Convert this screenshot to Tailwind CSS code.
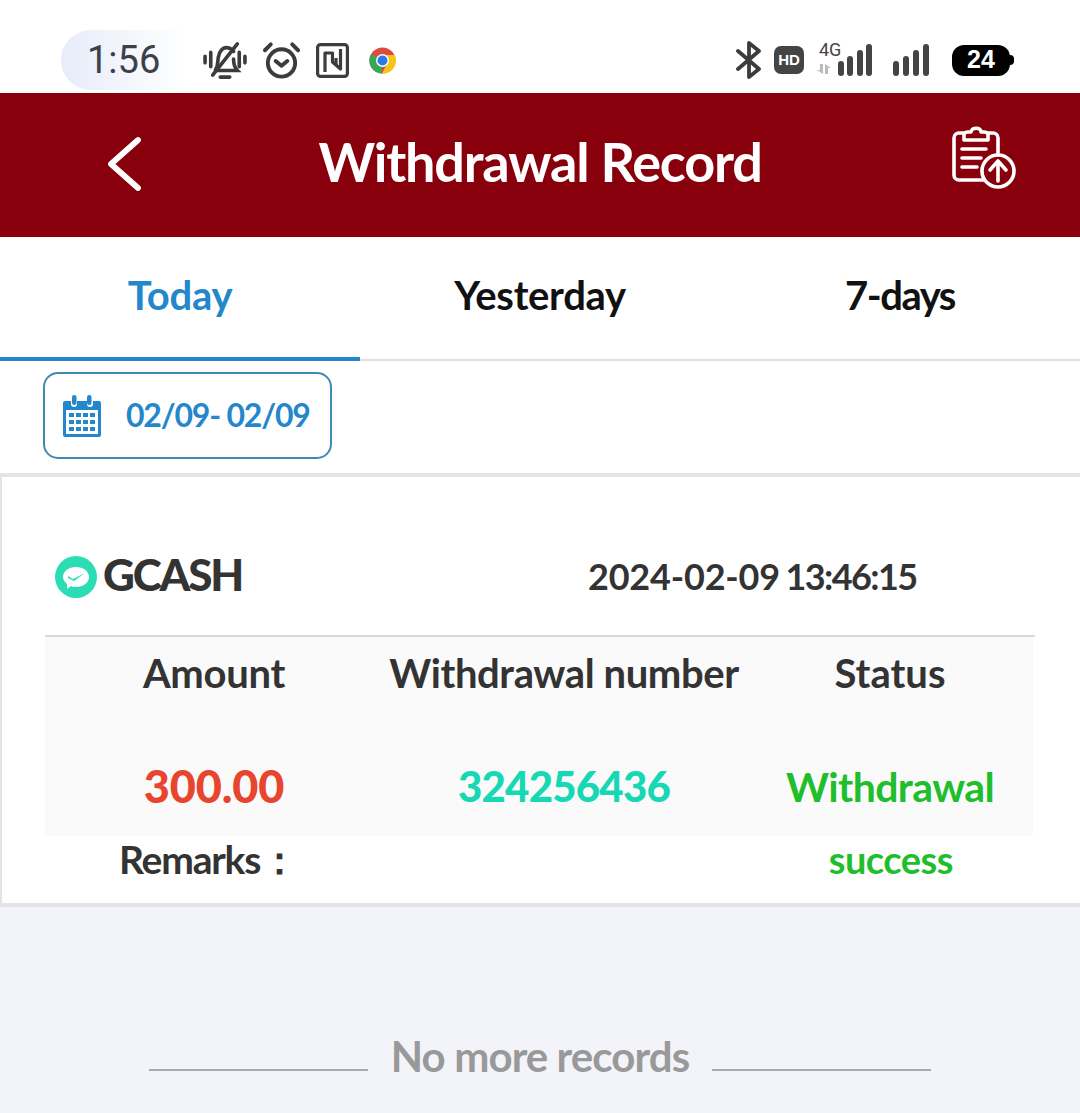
<!DOCTYPE html>
<html><head><meta charset="utf-8">
<script src="https://cdn.jsdelivr.net/npm/@tailwindcss/browser@4"></script>
</head>
<body class="m-0 bg-[#f3f3fa]">
<div class="w-[1080px] h-[1113px] overflow-hidden flex flex-col font-['Lato',sans-serif] bg-[#f3f3fa]">
  <!-- status bar -->
  <div class="h-[93px] bg-white flex items-center justify-between pl-[61px] pr-[66px] pt-[27px] shrink-0">
    <div class="flex items-center">
      <div class="w-[126px] h-[60px] rounded-l-[30px] bg-gradient-to-r from-[#e6ecf9] to-white flex items-center pl-[26px] font-['Roboto',sans-serif] text-[38px] text-[#3c4048]">1:56</div>
      <div class="flex items-center gap-[15px] ml-[16px]">
        <svg width="44" height="38" viewBox="0 0 46 40" fill="none" stroke="#3c3c3c" stroke-width="3.800" stroke-linecap="round"><path d="M2 16v7M8 12v15M44 16v7M38 12v15"/><path d="M13 30c3-4 2-8 3-13 1-7 5-10 8-10 3 0 6 1 8 4M32 19c0 5 1 9 4 12H13"/><path d="M10 36 36 3"/><path d="M18 38h10"/></svg>
        <svg width="39" height="40" viewBox="0 0 40 40" fill="none" stroke="#3c3c3c" stroke-width="4" stroke-linecap="round" stroke-linejoin="round"><circle cx="20" cy="23" r="14"/><path d="M14 21l6 5 6-5M3 10l6-6M37 10l-6-6"/></svg>
        <svg width="33" height="35" viewBox="0 0 33 35" fill="none" stroke="#3c3c3c" stroke-width="3.200" stroke-linejoin="round"><rect x="1.600" y="1.600" width="29.800" height="31.800" rx="3"/><path d="M9 29V10h7.500v9l8 7V6"/><path d="M20 15v7"/></svg>
        <svg class="ml-[5px]" width="27" height="27" viewBox="0 0 27 27"><circle cx="13.500" cy="13.500" r="13" fill="#dd4b3e"/><path d="M13.500 13.500 2 7A13 13 0 0 0 13 26.500z" fill="#3aa757"/><path d="M13.500 8h12.200A13 13 0 0 1 13 26.500l6-12z" fill="#f5c518"/><circle cx="13.500" cy="13.500" r="6.500" fill="#fff"/><circle cx="13.500" cy="13.500" r="5" fill="#2b79e4"/></svg>
      </div>
    </div>
    <div class="flex items-center">
      <svg width="26" height="38" viewBox="0 0 26 38" fill="none" stroke="#3c3c3c" stroke-width="3.800" stroke-linejoin="round" stroke-linecap="round"><path d="M2 10l21 18-10 8V2l10 8L2 28"/></svg>
      <div class="ml-[12px] w-[30px] h-[28px] rounded-[7px] bg-[#444] text-white font-['Liberation_Sans',sans-serif] font-bold text-[15px] flex items-center justify-center">HD</div>
      <div class="relative ml-[13px] w-[55px] h-[32px] flex items-end justify-end gap-[3.500px]">
        <span class="absolute left-[2px] top-[-3px] text-[#444] font-['Roboto',sans-serif] text-[18px] leading-[18px]">4G</span>
        <svg class="absolute left-[-1px] bottom-[2px]" width="16" height="10" viewBox="0 0 16 10" fill="#bbb"><path d="M7 0v10L1 6h3V0zM9 0l6 4h-3v6H9z"/></svg>
        <span class="w-[6px] h-[15px] rounded-[3px] bg-[#444]"></span><span class="w-[6px] h-[20px] rounded-[3px] bg-[#444]"></span><span class="w-[6px] h-[26px] rounded-[3px] bg-[#444]"></span><span class="w-[6px] h-[32px] rounded-[3px] bg-[#444]"></span>
      </div>
      <div class="ml-[21px] flex items-end gap-[4px] h-[32px]">
        <span class="w-[6px] h-[15px] rounded-[3px] bg-[#444]"></span><span class="w-[6px] h-[20px] rounded-[3px] bg-[#444]"></span><span class="w-[6px] h-[26px] rounded-[3px] bg-[#444]"></span><span class="w-[6px] h-[32px] rounded-[3px] bg-[#444]"></span>
      </div>
      <div class="ml-[23px] w-[58px] h-[31px] rounded-[12px] bg-black text-white font-['Liberation_Sans',sans-serif] font-bold text-[25px] flex items-center justify-center">24</div>
      <div class="w-[4px] h-[10px] rounded-r-[4px] bg-black"></div>
    </div>
  </div>
  <!-- header -->
  <div class="h-[144px] bg-[#89000d] flex items-center justify-between shrink-0 relative px-[106px]">
    <svg class="mb-[3px]" width="36" height="56" viewBox="0 0 36 56" fill="none" stroke="#fff" stroke-width="5.800" stroke-linecap="round" stroke-linejoin="round"><path d="M32 4 5 28l27 24"/></svg>
    <div class="absolute inset-0 flex items-center justify-center text-white font-bold text-[54px] tracking-[-1.200px] pb-[8px]">Withdrawal Record</div>
    <svg class="mr-[-42px] mb-[16px] relative" width="66" height="64" viewBox="0 0 66 64" fill="none" stroke="#fff" stroke-width="3.600" stroke-linecap="round" stroke-linejoin="round"><path d="M34 55H9a5 5 0 0 1-5-5V13a5 5 0 0 1 5-5h5M38 8h5a5 5 0 0 1 5 5v15"/><path d="M14 15h24v-5c0-2-2-3-4-3h-3c0-5-9-5-10 0h-3c-2 0-4 1-4 3z"/><path d="M12 24h24M12 33h19M12 42h15"/><circle cx="48" cy="46" r="16"/><path d="M48 56V37M40 45l8-9 8 9"/></svg>
  </div>
  <!-- tabs -->
  <div class="h-[124px] bg-white grid grid-cols-3 border-b-2 border-[#e0e0e0] shrink-0 text-[40px] font-bold">
    <div class="flex items-center justify-center text-[#2487cc] border-b-4 border-[#2487cc] mb-[-2px] tracking-[-0.200px] pb-[4px]">Today</div>
    <div class="flex items-center justify-center text-[#111] tracking-[-0.300px] pb-[6px]">Yesterday</div>
    <div class="flex items-center justify-center text-[#111] tracking-[-1.500px] pb-[6px]">7-days</div>
  </div>
  <!-- date -->
  <div class="h-[112px] bg-white shrink-0 pl-[43px] pt-[11px]">
    <div class="w-[289px] h-[87px] rounded-[15px] border-2 border-[#3f8bb0] flex items-center pl-[17px] gap-[24px]">
      <svg width="40" height="44" viewBox="0 0 40 44"><path d="M3 7h6v3a3 3 0 0 0 6 0V7h10v3a3 3 0 0 0 6 0V7h6a2 2 0 0 1 2 2v32a2 2 0 0 1-2 2H3a2 2 0 0 1-2-2V9a2 2 0 0 1 2-2z" fill="#2487cc"/><rect x="10" y="1" width="4.500" height="10" rx="2.200" fill="#2487cc"/><rect x="25" y="1" width="4.500" height="10" rx="2.200" fill="#2487cc"/><rect x="4" y="16" width="32" height="24" fill="#fff"/><path d="M7 19h5v4H7zM14 19h5v4h-5zM21 19h5v4h-5zM28 19h5v4h-5zM7 26h5v4H7zM14 26h5v4h-5zM21 26h5v4h-5zM28 26h5v4h-5zM7 33h5v4H7zM14 33h5v4h-5zM21 33h5v4h-5zM28 33h5v4h-5z" fill="#2487cc"/></svg>
      <span class="text-[#2487cc] font-bold text-[32px] tracking-[-1.200px] whitespace-nowrap pb-[2px]">02/09- 02/09</span>
    </div>
  </div>
  <!-- card -->
  <div class="h-[434px] bg-white border-y-4 border-[#e4e4e4] border-l-2 border-r-0 shrink-0 flex flex-col pl-[43px] pr-[45px] text-[#333]">
    <div class="h-[160px] shrink-0 flex items-center pt-[35px] border-b-2 border-[#d8d8d8] relative">
      <svg class="ml-[10px] mt-[6px]" width="42" height="42" viewBox="0 0 42 42"><circle cx="21" cy="21" r="21" fill="#2bdcb4"/><path d="M8 21c0-6 6-10 13-10s13 4 13 10-6 10-13 10c-2 0-4 0-5-1l-4 3 0-5c-2-2-4-4-4-7z" fill="#fff"/><path d="M13 20l5 3 12-6-11 8-6-3z" fill="#2bdcb4"/></svg>
      <span class="ml-[6px] font-black text-[44px] tracking-[-2.200px] text-[#333]">GCASH</span>
      <span class="absolute left-[543px] top-[72px] font-bold text-[36px] tracking-[-0.200px] [word-spacing:-3px] whitespace-nowrap">2024-02-09 <span class="tracking-[-1.600px]">13:46:15</span></span>
    </div>
    <div class="h-[199px] shrink-0 bg-[#fafafa] grid grid-cols-[338px_362px_288px] text-center mr-[2px]">
      <div class="flex flex-col items-center">
        <span class="h-[76px] flex items-center font-bold text-[40px] tracking-[-0.300px] pb-[4px]">Amount</span>
        <span class="h-[123px] flex items-center font-black text-[45px] text-[#e8452e] tracking-[-0.100px] pt-[24px]">300.00</span>
      </div>
      <div class="flex flex-col items-center">
        <span class="h-[76px] flex items-center font-bold text-[40px] tracking-[-0.400px] whitespace-nowrap pb-[4px]">Withdrawal number</span>
        <span class="h-[123px] flex items-center font-black text-[42px] text-[#16d8b4] tracking-[-0.800px] pt-[24px]">324256436</span>
      </div>
      <div class="flex flex-col items-center pl-[2px]">
        <span class="h-[76px] flex items-center font-bold text-[40px] pb-[4px]">Status</span>
        <span class="h-[123px] flex items-center font-bold text-[41px] text-[#1ebe2c] tracking-[-0.600px] pt-[24px]">Withdrawal</span>
      </div>
    </div>
    <div class="flex-1 flex items-start pt-[1px]">
      <span class="ml-[74px] font-bold text-[39px] tracking-[-1.200px] leading-[44px]">Remarks：</span>
      <span class="ml-auto mr-[82px] font-bold text-[38px] text-[#1ebe2c] tracking-[-0.500px] leading-[44px]">success</span>
    </div>
  </div>
  <!-- footer -->
  <div class="flex items-center justify-center gap-[23px] mt-[124px]">
    <div class="w-[219px] h-[2px] bg-[#aaa] mt-[27px]"></div>
    <span class="font-bold text-[#999] text-[42px] tracking-[-0.900px] leading-[50px]">No more records</span>
    <div class="w-[219px] h-[2px] bg-[#aaa] mt-[27px]"></div>
  </div>
</div>
</body></html>
